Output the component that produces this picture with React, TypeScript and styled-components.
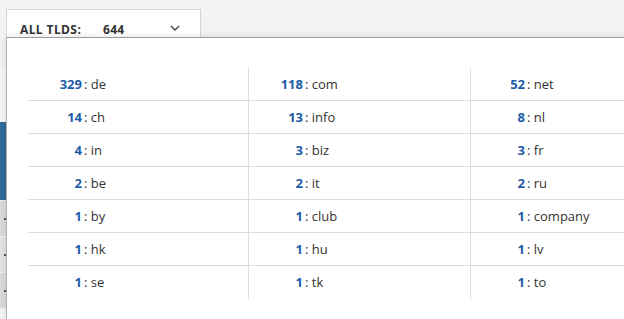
import { type FC } from "react";
import styled, { createGlobalStyle } from "styled-components";

const GlobalStyle = createGlobalStyle`
  html, body {
    margin: 0;
    padding: 0;
    background: #f3f3f3;
    overflow: hidden;
    font-family: "Open Sans", "Liberation Sans", sans-serif;
  }
`;

type Tld = { count: number; name: string };

// rows of three, the way the dropdown shows them
const TLDS: Tld[][] = [
  [{ count: 329, name: "de" }, { count: 118, name: "com" }, { count: 52, name: "net" }],
  [{ count: 14, name: "ch" }, { count: 13, name: "info" }, { count: 8, name: "nl" }],
  [{ count: 4, name: "in" }, { count: 3, name: "biz" }, { count: 3, name: "fr" }],
  [{ count: 2, name: "be" }, { count: 2, name: "it" }, { count: 2, name: "ru" }],
  [{ count: 1, name: "by" }, { count: 1, name: "club" }, { count: 1, name: "company" }],
  [{ count: 1, name: "hk" }, { count: 1, name: "hu" }, { count: 1, name: "lv" }],
  [{ count: 1, name: "se" }, { count: 1, name: "tk" }, { count: 1, name: "to" }],
];

// table rows behind the dropdown (only a sliver shows on the left)
const BG_ROWS: { tone: "light" | "active" | "gray" | "mid"; h: number; dot?: boolean }[] = [
  { tone: "light", h: 54 },
  { tone: "active", h: 79 },
  { tone: "gray", h: 36, dot: true },
  { tone: "mid", h: 36, dot: true },
  { tone: "gray", h: 36, dot: true },
  { tone: "light", h: 20 },
];

const App: FC = () => {
  const rowCount = TLDS.length;
  return (
    <>
      <GlobalStyle />
      <Page>
        <Toolbar>
          <DropButton>
            <Label>ALL TLDS:</Label>
            <Total>644</Total>
            <Chevron viewBox="0 0 10 6">
              <polyline points="1,1 5,5 9,1" />
            </Chevron>
          </DropButton>
        </Toolbar>

        <BgTable>
          {BG_ROWS.map((r, i) => (
            <BgRow key={i} $tone={r.tone} style={{ height: r.h }}>
              {r.dot && <Dot />}
            </BgRow>
          ))}
        </BgTable>

        <Panel>
          <Grid>
            {TLDS.map((row, ri) =>
              row.map((t, ci) => (
                <Cell key={`${ri}-${ci}`} $lastRow={ri === rowCount - 1} $lastCol={ci === 2}>
                  <Count>{t.count}</Count>
                  <Name>: {t.name}</Name>
                </Cell>
              ))
            )}
          </Grid>
        </Panel>
      </Page>
    </>
  );
};

const Page = styled.div`
  position: relative;
  width: 624px;
  height: 319px;
  overflow: hidden;
`;

const Toolbar = styled.div`
  display: flex;
  padding: 9px 0 0 6px;
  height: 28px;
`;

const DropButton = styled.div`
  display: flex;
  align-items: center;
  box-sizing: border-box;
  width: 195px;
  height: 28px;
  padding: 12px 0 0 13px;
  background: #fff;
  border: 1px solid #d4d4d4;
  border-bottom: none;
  color: #333;
  font-size: 12px;
  font-weight: 700;
`;

const Label = styled.span`
  width: 83px;
  letter-spacing: 0.4px;
`;

const Total = styled.span`
  flex: 1;
  letter-spacing: 0.3px;
`;

const Chevron = styled.svg`
  width: 10px;
  height: 6px;
  margin: -3px 20px 0 0;
  fill: none;
  stroke: #444;
  stroke-width: 1.4;
`;

const BgTable = styled.div`
  display: flex;
  flex-direction: column;
  padding-top: 31px;
`;

const BgRow = styled.div<{ $tone: "light" | "active" | "gray" | "mid" }>`
  position: relative;
  box-sizing: border-box;
  border-bottom: 1px solid #f0f0f0;
  background: ${(p) =>
    p.$tone === "active" ? "#2f6a98" : p.$tone === "gray" ? "#dcdcdc" : p.$tone === "mid" ? "#e4e4e4" : "#f7f7f7"};
`;

const Dot = styled.span`
  position: absolute;
  left: 4px;
  top: 17px;
  width: 2px;
  height: 2px;
  background: #555;
`;

const Panel = styled.div`
  position: absolute;
  top: 37px;
  left: 6px;
  width: 720px;
  height: 300px;
  box-sizing: border-box;
  padding: 30px 21px;
  background: #fff;
  border-top: 1px solid #9c9c9c;
  border-left: 1px solid #b4b4b4;
  box-shadow: 0 0 8px rgba(0, 0, 0, 0.12);
`;

const Grid = styled.div`
  display: grid;
  grid-template-columns: 221px 222px 222px;
`;

const Cell = styled.div<{ $lastRow: boolean; $lastCol: boolean }>`
  display: flex;
  align-items: center;
  box-sizing: border-box;
  height: 33px;
  padding-bottom: 1px;
  border-bottom: ${(p) => (p.$lastRow ? "none" : "1px solid #dcdcdc")};
  border-right: ${(p) => (p.$lastCol ? "none" : "1px solid #dcdcdc")};
  font-size: 13px;
  color: #333;
`;

const Count = styled.span`
  width: 54px;
  text-align: right;
  margin-right: 2px;
  font-weight: 700;
  color: #1c5ca6;
`;

const Name = styled.span`
  white-space: pre;
`;

export default App;
